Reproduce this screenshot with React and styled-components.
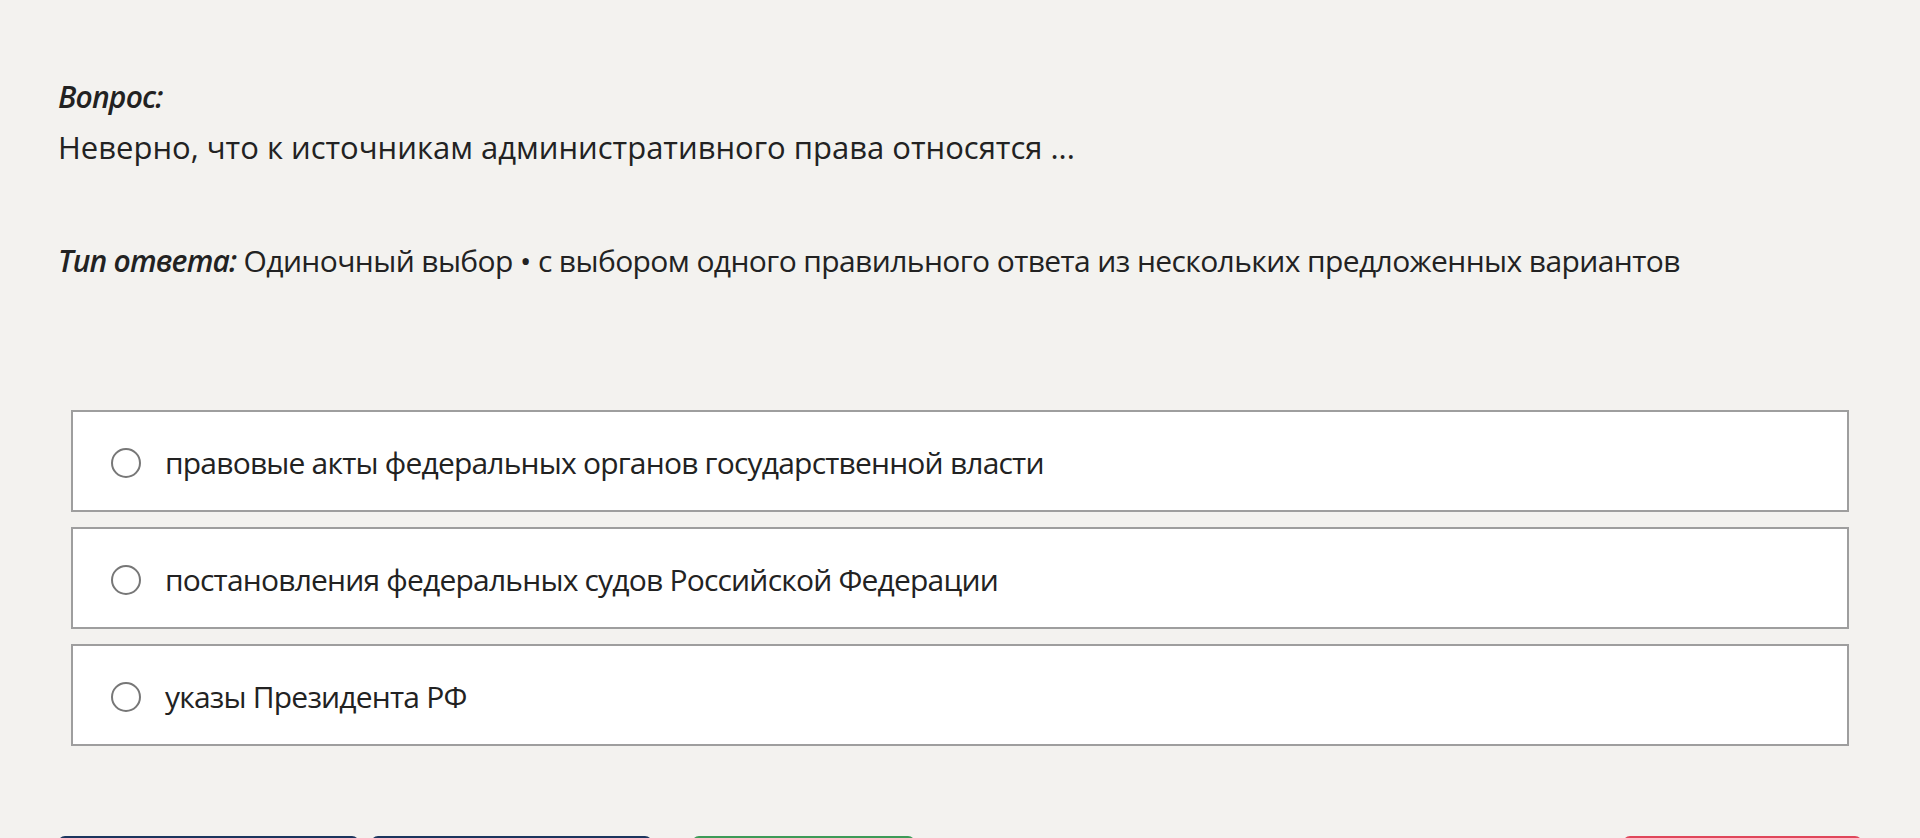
import styled, { createGlobalStyle } from 'styled-components';
import { useState } from 'react';

const GlobalStyle = createGlobalStyle`
  html, body {
    margin: 0;
    padding: 0;
    background: #f3f2ef;
  }
  body {
    font-family: "Open Sans", "Noto Sans", sans-serif;
    color: #222;
  }
`;

const Page = styled.div`
  padding: 76px 58px 40px;
`;

const Label = styled.div`
  font-size: 30px;
  line-height: 42px;
  font-style: italic;
  font-weight: 600;
  letter-spacing: -0.8px;
`;

const Question = styled.div`
  margin-top: 8px;
  font-size: 31px;
  line-height: 42px;
`;

const TypeLine = styled.div`
  margin-top: 72px;
  font-size: 30px;
  line-height: 42px;
  letter-spacing: -0.6px;

  b {
    font-style: italic;
    font-weight: 600;
    letter-spacing: -0.8px;
  }
`;

const Options = styled.div`
  margin: 128px 13px 0;
  display: flex;
  flex-direction: column;
  gap: 15px;
`;

const Option = styled.label`
  display: flex;
  align-items: center;
  height: 102px;
  box-sizing: border-box;
  padding: 4px 0 0 38px;
  background: #fff;
  border: 2px solid #9e9e9e;
  cursor: pointer;
  font-size: 30px;
  line-height: 42px;
  letter-spacing: -0.8px;
`;

const Radio = styled.span`
  flex: none;
  width: 30px;
  height: 30px;
  box-sizing: border-box;
  border-radius: 50%;
  border: 2px solid ${p => (p.checked ? '#1c355e' : '#777')};
  margin-right: 24px;
  display: flex;
  align-items: center;
  justify-content: center;

  &::after {
    content: '';
    width: 14px;
    height: 14px;
    border-radius: 50%;
    background: ${p => (p.checked ? '#1c355e' : 'transparent')};
  }
`;

const Buttons = styled.div`
  margin-top: 90px;
  display: flex;
  align-items: center;
`;

const Button = styled.button`
  height: 56px;
  width: ${p => p.w}px;
  margin-left: ${p => p.gap || 0}px;
  border: none;
  border-radius: 7px;
  background: ${p => p.bg};
  cursor: pointer;
`;

const Spacer = styled.div`
  flex: 1;
`;

const answers = [
  'правовые акты федеральных органов государственной власти',
  'постановления федеральных судов Российской Федерации',
  'указы Президента РФ',
];

const App = () => {
  const [selected, setSelected] = useState(null);

  return (
    <Page>
      <GlobalStyle />
      <Label>Вопрос:</Label>
      <Question>Неверно, что к источникам административного права относятся ...</Question>
      <TypeLine>
        <b>Тип ответа:</b> Одиночный выбор • с выбором одного правильного ответа из нескольких предложенных вариантов
      </TypeLine>
      <Options>
        {answers.map((a, i) => (
          <Option key={i} onClick={() => setSelected(i)}>
            <Radio checked={selected === i} />
            {a}
          </Option>
        ))}
      </Options>
      <Buttons>
        <Button w={301} bg='#1c355e' aria-label='Предыдущий вопрос' />
        <Button w={281} gap={12} bg='#1c355e' aria-label='Следующий вопрос' />
        <Button w={223} gap={40} bg='#3d9b57' aria-label='Ответить' />
        <Spacer />
        <Button w={239} bg='#e0475a' aria-label='Завершить тест' />
      </Buttons>
    </Page>
  );
};

export default App;
